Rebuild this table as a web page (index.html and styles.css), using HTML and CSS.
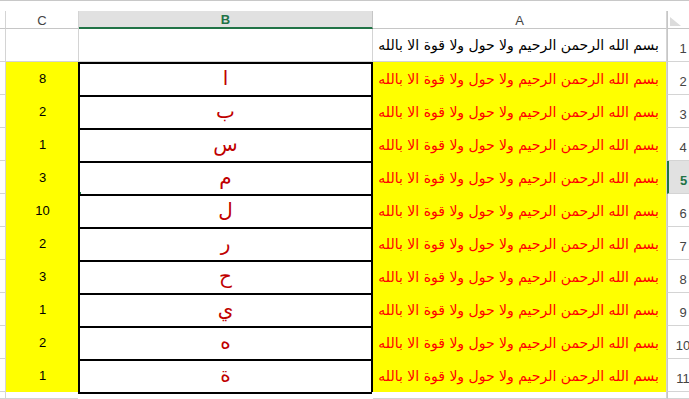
FILE: index.html
```html
<!DOCTYPE html>
<html lang="ar">
<head>
<meta charset="utf-8">
<title>Sheet</title>
<link rel="stylesheet" href="styles.css">
</head>
<body>
<div class="sheet">
  <div class="topbar"></div>
  <div class="row hdr">
    <div class="cell d"></div>
    <div class="cell colh">C</div>
    <div class="cell colh sel">B</div>
    <div class="cell colh">A</div>
    <div class="cell corner"><span class="tri"></span></div>
  </div>

  <div class="row">
    <div class="cell d"></div>
    <div class="cell c plain"></div>
    <div class="cell b plain"></div>
    <div class="cell a plain">بسم الله الرحمن الرحيم ولا حول ولا قوة الا بالله</div>
    <div class="cell rh"><span>1</span></div>
  </div>

  <div class="row">
    <div class="cell d"></div>
    <div class="cell c">8</div>
    <div class="cell b">ا</div>
    <div class="cell a">بسم الله الرحمن الرحيم ولا حول ولا قوة الا بالله</div>
    <div class="cell rh"><span>2</span></div>
  </div>
  <div class="row">
    <div class="cell d"></div>
    <div class="cell c">2</div>
    <div class="cell b">ب</div>
    <div class="cell a">بسم الله الرحمن الرحيم ولا حول ولا قوة الا بالله</div>
    <div class="cell rh"><span>3</span></div>
  </div>
  <div class="row">
    <div class="cell d"></div>
    <div class="cell c">1</div>
    <div class="cell b">س</div>
    <div class="cell a">بسم الله الرحمن الرحيم ولا حول ولا قوة الا بالله</div>
    <div class="cell rh"><span>4</span></div>
  </div>
  <div class="row">
    <div class="cell d"></div>
    <div class="cell c">3</div>
    <div class="cell b active">م<span class="selbox"><span class="handle"></span></span></div>
    <div class="cell a">بسم الله الرحمن الرحيم ولا حول ولا قوة الا بالله</div>
    <div class="cell rh selrow"><span>5</span></div>
  </div>
  <div class="row">
    <div class="cell d"></div>
    <div class="cell c">10</div>
    <div class="cell b">ل</div>
    <div class="cell a">بسم الله الرحمن الرحيم ولا حول ولا قوة الا بالله</div>
    <div class="cell rh"><span>6</span></div>
  </div>
  <div class="row">
    <div class="cell d"></div>
    <div class="cell c">2</div>
    <div class="cell b">ر</div>
    <div class="cell a">بسم الله الرحمن الرحيم ولا حول ولا قوة الا بالله</div>
    <div class="cell rh"><span>7</span></div>
  </div>
  <div class="row">
    <div class="cell d"></div>
    <div class="cell c">3</div>
    <div class="cell b">ح</div>
    <div class="cell a">بسم الله الرحمن الرحيم ولا حول ولا قوة الا بالله</div>
    <div class="cell rh"><span>8</span></div>
  </div>
  <div class="row">
    <div class="cell d"></div>
    <div class="cell c">1</div>
    <div class="cell b">ي</div>
    <div class="cell a">بسم الله الرحمن الرحيم ولا حول ولا قوة الا بالله</div>
    <div class="cell rh"><span>9</span></div>
  </div>
  <div class="row">
    <div class="cell d"></div>
    <div class="cell c">2</div>
    <div class="cell b">ه</div>
    <div class="cell a">بسم الله الرحمن الرحيم ولا حول ولا قوة الا بالله</div>
    <div class="cell rh"><span>10</span></div>
  </div>
  <div class="row">
    <div class="cell d"></div>
    <div class="cell c">1</div>
    <div class="cell b">ة</div>
    <div class="cell a">بسم الله الرحمن الرحيم ولا حول ولا قوة الا بالله</div>
    <div class="cell rh"><span>11</span></div>
  </div>
  <div class="row last">
    <div class="cell d"></div>
    <div class="cell c plain"></div>
    <div class="cell b plain endb"></div>
    <div class="cell a plain"></div>
    <div class="cell rh"></div>
  </div>
</div>
</body>
</html>
```

FILE: styles.css
```css
* { box-sizing: border-box; }
html, body { margin: 0; padding: 0; background: #fff; }
body { width: 689px; height: 399px; overflow: hidden; font-family: "Liberation Sans", Arial, sans-serif; }

.sheet { width: 689px; }

.topbar { height: 11px; border-top: 1px solid #c8c8c8; background: #fff; }

.row {
  display: grid;
  grid-template-columns: 6px 73px 294px 294px 22px;
  height: 33px;
}
.row.hdr { height: 18px; }
.row.last { height: 7px; }

.cell {
  display: flex;
  align-items: center;
  justify-content: center;
  overflow: hidden;
  border-right: 1px solid #d4d4d4;
  border-bottom: 1px solid #d4d4d4;
  font-size: 13px;
  color: #000;
}

/* header row */
.colh {
  color: #444;
  background: #fff;
  border-bottom: 1px solid #c6c6c6;
  padding-top: 1px;
}
.hdr .d { border-bottom: 1px solid #c6c6c6; }
.colh.sel {
  background: #e1e1e1;
  color: #217346;
  font-weight: bold;
  border-bottom: 2px solid #217346;
  border-right-color: #c6c6c6;
}
.corner {
  border-right: none;
  border-left: 1px solid #c6c6c6;
  border-bottom: 1px solid #c6c6c6;
  align-items: flex-end;
  justify-content: flex-start;
  padding: 0 0 2px 2px;
}
.tri {
  width: 0;
  height: 0;
  border-left: 11px solid #dcdcdc;
  border-top: 9px solid transparent;
}

/* data cells */
.c {
  background: #ffff00;
  border: none;
  color: #000;
}
.c.plain {
  background: #fff;
  border-right: 1px solid #d4d4d4;
  border-bottom: 1px solid #d4d4d4;
}

.b {
  margin-left: -1px;
  border: 2px solid #000;
  border-bottom: none;
  background: #fff;
  color: #c00000;
  font-family: "DejaVu Sans", sans-serif;
  font-size: 20px;
  padding-bottom: 4px;
  position: relative;
}
.b.plain {
  margin-left: 0;
  border: none;
  border-right: 1px solid #d4d4d4;
  border-bottom: 1px solid #d4d4d4;
}
.b.endb {
  margin-left: -1px;
  margin-right: 1px;
  border-top: 2px solid #000;
  border-right: none;
  border-bottom: none;
}

.a {
  background: #ffff00;
  border-bottom: none;
  direction: rtl;
  justify-content: flex-start;
  padding-right: 7px;
  color: #ff0000;
  font-family: "DejaVu Sans", sans-serif;
  font-size: 14px;
  white-space: nowrap;
}
.a.plain {
  background: #fff;
  color: #000;
  border-bottom: 1px solid #d4d4d4;
}

/* row headers */
.rh {
  border-right: none;
  border-left: 1px solid #c6c6c6;
  border-bottom: 1px solid #d4d4d4;
  background: #fff;
  justify-content: flex-start;
  align-items: flex-end;
  padding-bottom: 6px;
  color: #444;
}
.rh span {
  flex: 0 0 30px;
  width: 30px;
  text-align: center;
  line-height: 1;
}
.rh.selrow {
  background: #e1e1e1;
  border-left: 2px solid #217346;
  color: #217346;
  font-weight: bold;
}
.rh.selrow span { flex-basis: 29px; width: 29px; }

/* selection overlay */
.selbox {
  position: absolute;
  left: -3px;
  top: -2px;
  width: 297px;
  height: 35px;
  border: 2px solid #217346;
}
.handle {
  position: absolute;
  left: -3px;
  bottom: -3px;
  width: 6px;
  height: 6px;
  background: #217346;
  border: 1px solid #fff;
  border-left: none;
  border-bottom: none;
}
```
